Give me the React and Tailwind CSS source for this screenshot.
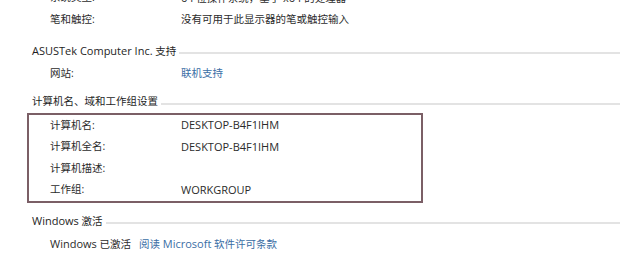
import React from 'react'

const font = { fontFamily: '"Open Sans", "Noto Sans CJK SC", sans-serif' }

// Latin runs in the reference are a touch larger than the CJK glyphs
function L({ children }) {
  return <span className="text-[11px]">{children}</span>
}

function Heading({ children }) {
  return (
    <div className="flex items-center h-[20px] pl-[32px]">
      <span className="text-[#1e1e1e] whitespace-nowrap">{children}</span>
      <div className="flex-1 ml-[3px] h-[2px] bg-[#e3e3e3] mt-[3px]" />
    </div>
  )
}

function Row({ label, value, link, h = 'h-[21px]' }) {
  return (
    <div className={`flex items-center ${h}`}>
      <span className="w-[131px] shrink-0 text-[#2b2b2b]">{label}</span>
      <span className={link ? 'text-[#3a6ea5]' : 'text-[#2b2b2b]'}>{value}</span>
    </div>
  )
}

export default function App() {
  return (
    <div className="w-[620px] h-[256px] overflow-hidden bg-white text-[10.5px]" style={font}>
      <div className="mt-[-13px]">
        {/* system rows */}
        <div className="pl-[50px]">
          <Row label="系统类型:" value={<><L>64</L> 位操作系统，基于 <L>x64</L> 的处理器</>} h="h-[22px]" />
          <Row label="笔和触控:" value="没有可用于此显示器的笔或触控输入" />
        </div>

        <div className="mt-[11px]">
          <Heading><L>ASUSTek Computer Inc.</L> 支持</Heading>
        </div>
        <div className="pl-[50px] mt-[3px]">
          <Row label="网站:" value="联机支持" link h="h-[20px]" />
        </div>

        <div className="mt-[8px]">
          <Heading>计算机名、域和工作组设置</Heading>
        </div>
        <div className="ml-[27px] mt-[1px] w-[396px] border-2 border-[#7b5f66] pl-[21px]">
          <Row label="计算机名:" value={<L>DESKTOP-B4F1IHM</L>} h="h-[21.5px]" />
          <Row label="计算机全名:" value={<L>DESKTOP-B4F1IHM</L>} h="h-[21.5px]" />
          <Row label="计算机描述:" value="" h="h-[21.5px]" />
          <Row label="工作组:" value={<L>WORKGROUP</L>} h="h-[21.5px]" />
        </div>

        <div className="mt-[8px]">
          <Heading><L>Windows</L> 激活</Heading>
        </div>
        <div className="flex items-center h-[20px] pl-[50px] mt-[3px]">
          <span className="text-[#2b2b2b]"><L>Windows</L> 已激活</span>
          <span className="ml-[8px] text-[#3a6ea5]">阅读 <L>Microsoft</L> 软件许可条款</span>
        </div>
      </div>
    </div>
  )
}
